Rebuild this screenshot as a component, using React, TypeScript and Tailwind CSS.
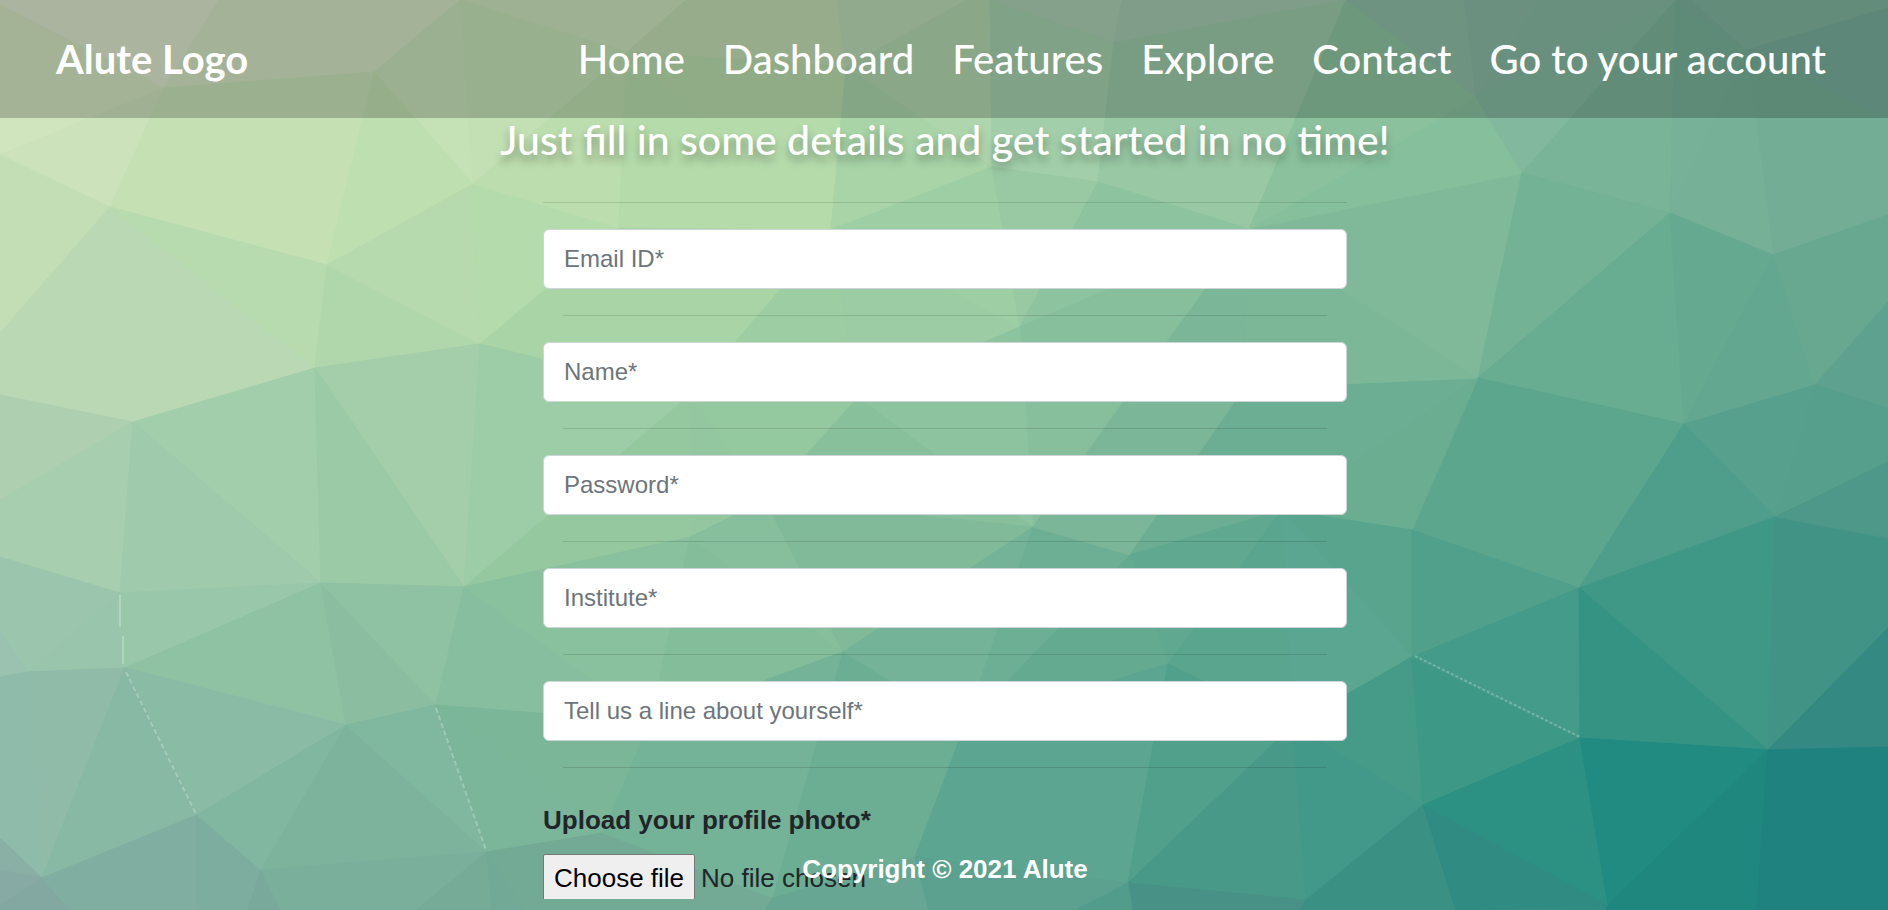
import { useRef, useState } from "react";

// Corner points of the faceted backdrop, on a 1888 x 910 canvas.
const points: Record<string, [number, number]> = {
  tl: [0, 0], t1: [164, 0], t2: [219, 0], t3: [460, 0], t4: [686, 0], t5: [837, 0], t6: [967, 0], t7: [990, 0],
  t8: [1122, 0], t9: [1346, 0], t10: [1464, 0], t11: [1538, 0], t12: [1676, 0], t13: [1692, 0], t14: [1757, 0], tr: [1888, 0],
  l0: [0, 5], l1: [0, 155], l2: [0, 333], l3: [0, 395], l4: [0, 500], l5: [0, 557], l6: [0, 632], l7: [0, 677],
  l8: [0, 838], l9: [0, 870], l10: [0, 905], bl: [0, 910],
  r1: [1888, 8], r2: [1888, 117], r3: [1888, 215], r4: [1888, 302], r5: [1888, 408], r6: [1888, 462], r7: [1888, 538],
  r8: [1888, 628], r9: [1888, 747], r10: [1888, 840], br: [1888, 910],
  b1: [70, 910], b2: [197, 910], b3: [248, 910], b4: [281, 910], b5: [416, 910], b6: [492, 910], b7: [524, 910],
  b8: [765, 910], b9: [929, 910], b10: [1076, 910], b11: [1132, 910], b12: [1300, 910], b13: [1456, 910], b14: [1606, 910], b15: [1757, 910],
  A: [110, 207], B: [327, 265], C: [473, 184], D: [315, 368], E: [480, 344], F: [133, 422], G: [164, 88], H: [374, 72],
  I: [627, 52], J: [619, 228], K: [831, 230], L: [992, 167], M: [1098, 182], N: [1114, 43], Q: [846, 67], R: [1020, 327],
  U: [690, 395], V: [857, 397], S: [690, 537], T: [464, 587], O: [765, 500], W: [1249, 229], X: [1033, 527], Y: [1130, 555],
  Z: [843, 652], a: [1168, 664], b: [915, 857], c: [773, 898], d: [1128, 883], e: [603, 833], f: [487, 852], g: [1522, 173],
  h: [1476, 97], i: [1670, 213], j: [1773, 255], k: [1478, 378], l: [1684, 424], m: [1815, 385], o: [1747, 50], p: [1775, 517],
  q: [1579, 588], r: [1245, 388], s: [1282, 510], t: [1412, 530], u: [1412, 657], v: [1293, 725], w: [1306, 900], x: [1423, 805],
  y: [1580, 738], z: [1768, 750], ab: [1608, 905], ac: [120, 593], ad: [321, 583], ae: [28, 672], af: [125, 668],
  ag: [346, 725], ah: [436, 705], ai: [197, 815], aj: [261, 870], ak: [42, 878], al: [650, 722], am: [965, 725],
};

const facets = `
l0 tl t1 G #d8e6c9|l0 G l1 #d0e4bd|t1 t2 G #d8e6ca|t2 t3 H G #d0e4c1|t3 H C #c5e1b6|l1 G A #cbe2ba|G H B A #c5e1b4|H C B #bedfaf
l1 A l2 #c3deb5|A l2 l3 F D #b9d8b3|A B D #b8daaf|B D E #b0d7ac|B C E #b7d9ae|C E J #b3dbab
t3 t4 I #c8e3ba|t3 I C #c2e0b4|C I J #bcddad|I J K #b4dba9|t4 I Q t5 #bedcb0|I K Q #b5dbab|t5 t6 Q #b8d9b2|t6 t7 L Q #afd5ac
Q K L #a8d4a7|t7 t8 N #a8ceb0|t7 N M L #a2cfa9|t8 t9 N #a0c8ae|N t9 W #99c8a4|N W M #98c8a4
J K U #a9d5a6|E J U #a9d5a6|K V U #9dcea3|K R V #9bcca4|K L R #9dcea4|L M R #98c9a2|M W R #8ec3a0|R W X #87bf9d
R X V #8dc39f|V X O #89c09c|V U O #94c99f|U O S #93c79f|l3 l4 F #afcfb1|F l4 l5 ac #a7ceaf|F D ad #a2ceab
F ad ac #9fcaac|D E T #a3cea9|D ad T #9bcaa6|E U T #9dcda6|U S T #96c8a0|ac l5 l6 ae #9bc6ad|l6 l7 ae #9bc2b1|ac ae af #98c5ab
ac ad af #99c7aa|ad af ag #8fc1a3|ad ag ah #8bbda1|ad T ah #8fc1a3|T ah al #87be9f|T S al #89c09e|af ag ai #8abba5|ae af ak #8fbba8|l7 ae ak l8 #8fbcaa
af ai ak #87b9a4|l8 ak l9 #8aafa5|l9 ak l10 #87aba4|l10 ak b1 bl #82a8a1|ak b1 b2 ai #80aea0|ai b2 b3 aj #7dad9e|b3 aj b4 #79a99b|ag ai aj #81b7a1|ag aj f #7db39d
ag ah f #7fb79f|ah f e #7bb59a|ah al e #7bb699|aj f b5 b4 #7aaf9b|f b5 b6 #76ab98|f b6 b7 #72a896|f b7 b8 c e #72aa95
S Z al #83bd99|S O Z #87be9c|O X Z #81ba99|al Z c e #74b397|Z am b c #6bae93|c b b9 b8 #67a693|X Z am #74b397|X am Y #6caf95
W r Y X #7ab697|r k s Y #6cae93|W k r #7cb897|W g k #7fb99a|W h g #86bf9b|W t9 h #8bc29d|t9 t10 h #8bbda3
t10 t11 h #87b8a2|t11 t12 h #84b8a0|h t12 g #82b99e|g t12 i #79b398|t12 o i #76b198|t12 t13 o #7aaf99|t13 t14 o #7db29c
t14 tr r1 o #7db29c|o r1 r2 #75ad99|o r2 r3 j #74ad95|o j i #75b097|g i k #74b295|i k l #68ac92|i j l #66a991|j l m #64a791|j r3 r4 m #68a891
m r4 r5 #5fa18f|m r5 r6 p #579f8d|m l p #57a08d|k l q #5ca68d|l p q #4f9e8c|k q t #5da68e|k t s #6aad91|s t u #59a48d|t q u #50a08c
Y s a #60a990|Y a am #64aa91|s u v #5ba690|s v a #59a58d|am a d b #5ca590|b d b10 b9 #5ca18f|a v d #50a08b|v w d #499988|d w b12 b11 #489186|d b11 b10 #529c8b
u v x #459a88|v x w #42998a|u y x #3d9986|u q y #459b89|q p z #3f9786|q y z #359384|p z r8 r7 #419386|p r6 r7 #4d9888
z r8 r9 #348a82|x w b12 b13 #3a9083|x b13 ab #308b83|x y ab #2c9183|y z ab #218b81|ab z b15 b14 #20877e|z b15 br r10 r9 #20827f
`
  .trim()
  .split(/[|\n]/)
  .map((line) => {
    const parts = line.trim().split(" ");
    const fill = parts[parts.length - 1];
    return { fill, shape: parts.slice(0, -1).map((key) => points[key].join(",")).join(" ") };
  });

function Backdrop() {
  return (
    <svg
      className="absolute inset-0 h-full w-full"
      viewBox="0 0 1888 910"
      preserveAspectRatio="xMidYMid slice"
      aria-hidden="true"
    >
      <defs>
        <linearGradient id="base" x1="0" y1="0" x2="1" y2="1">
          <stop offset="0" stopColor="#cfe5bf" />
          <stop offset="0.5" stopColor="#89c09c" />
          <stop offset="1" stopColor="#20827f" />
        </linearGradient>
      </defs>
      <rect width="1888" height="910" fill="url(#base)" />
      {facets.map((facet, index) => (
        <polygon key={index} points={facet.shape} fill={facet.fill} stroke={facet.fill} strokeWidth="1" />
      ))}
      <g stroke="#ffffff" strokeOpacity="0.26" strokeWidth="2" fill="none">
        <path d="M120 595V627M123 636V664" />
        <path d="M126 672L196 814M436 708L486 850" strokeDasharray="5 3" />
        <path d="M1415 656L1580 737" strokeDasharray="3 2" />
      </g>
    </svg>
  );
}

const links = ["Home", "Dashboard", "Features", "Explore", "Contact", "Go to your account"];

const fields = [
  { id: "email", label: "Email ID*", type: "email" },
  { id: "name", label: "Name*", type: "text" },
  { id: "password", label: "Password*", type: "password" },
  { id: "institute", label: "Institute*", type: "text" },
  { id: "about", label: "Tell us a line about yourself*", type: "text" },
];

export default function App() {
  const picker = useRef<HTMLInputElement>(null);
  const [fileName, setFileName] = useState("No file chosen");

  return (
    <div className="relative flex h-screen flex-col overflow-hidden bg-[#89c09c] font-['Liberation_Sans',Arial,sans-serif] text-[#212529]">
      <Backdrop />

      <header className="relative flex h-[118px] shrink-0 items-center justify-between bg-[#0a0408]/22 px-14 font-[Lato,sans-serif] text-white">
        <a href="#top" className="text-[40px] font-bold whitespace-nowrap">
          Alute Logo
        </a>
        <nav className="flex gap-[38px] pr-1.5 text-[40px] font-medium whitespace-nowrap">
          {links.map((link) => (
            <a key={link} href="#top">
              {link}
            </a>
          ))}
        </nav>
      </header>

      <main className="relative mb-[11px] min-h-0 flex-1 overflow-hidden pl-0.5">
        <h1 className="text-center font-[Lato,sans-serif] text-[41px] leading-[44px] font-medium text-white [text-shadow:0_6px_8px_rgba(0,0,0,0.3)]">
          Just fill in some details and get started in no time!
        </h1>
        <form className="mx-auto mt-10 w-[804px] max-w-full">
          <hr className="mb-[26px] border-black/12" />
          {fields.map((field) => (
            <div key={field.id}>
              <input
                id={field.id}
                type={field.type}
                aria-label={field.label}
                placeholder={field.label}
                className="block h-[60px] w-full rounded-md border border-[#ced4da] bg-white px-5 text-2xl placeholder:text-[#6c757d] placeholder:opacity-100"
              />
              <hr className="mx-5 my-[26px] border-black/12" />
            </div>
          ))}
          <label htmlFor="photo" className="mt-[34px] block text-[26px] leading-9 font-bold">
            Upload your profile photo*
          </label>
          <div className="mt-4 flex items-center gap-1.5 text-[26px]">
            <input
              ref={picker}
              id="photo"
              type="file"
              tabIndex={-1}
              className="sr-only"
              onChange={(event) => setFileName(event.target.files?.[0]?.name ?? "No file chosen")}
            />
            <button
              type="button"
              onClick={() => picker.current?.click()}
              className="h-12 rounded-xs border border-[#767676] bg-[#efefef] px-2.5 text-black"
            >
              Choose file
            </button>
            <span>{fileName}</span>
          </div>
        </form>
      </main>

      <footer className="absolute inset-x-0 bottom-[25px] pl-0.5 text-center text-[26px] leading-8 font-bold text-white">
        Copyright © 2021 Alute
      </footer>
    </div>
  );
}
